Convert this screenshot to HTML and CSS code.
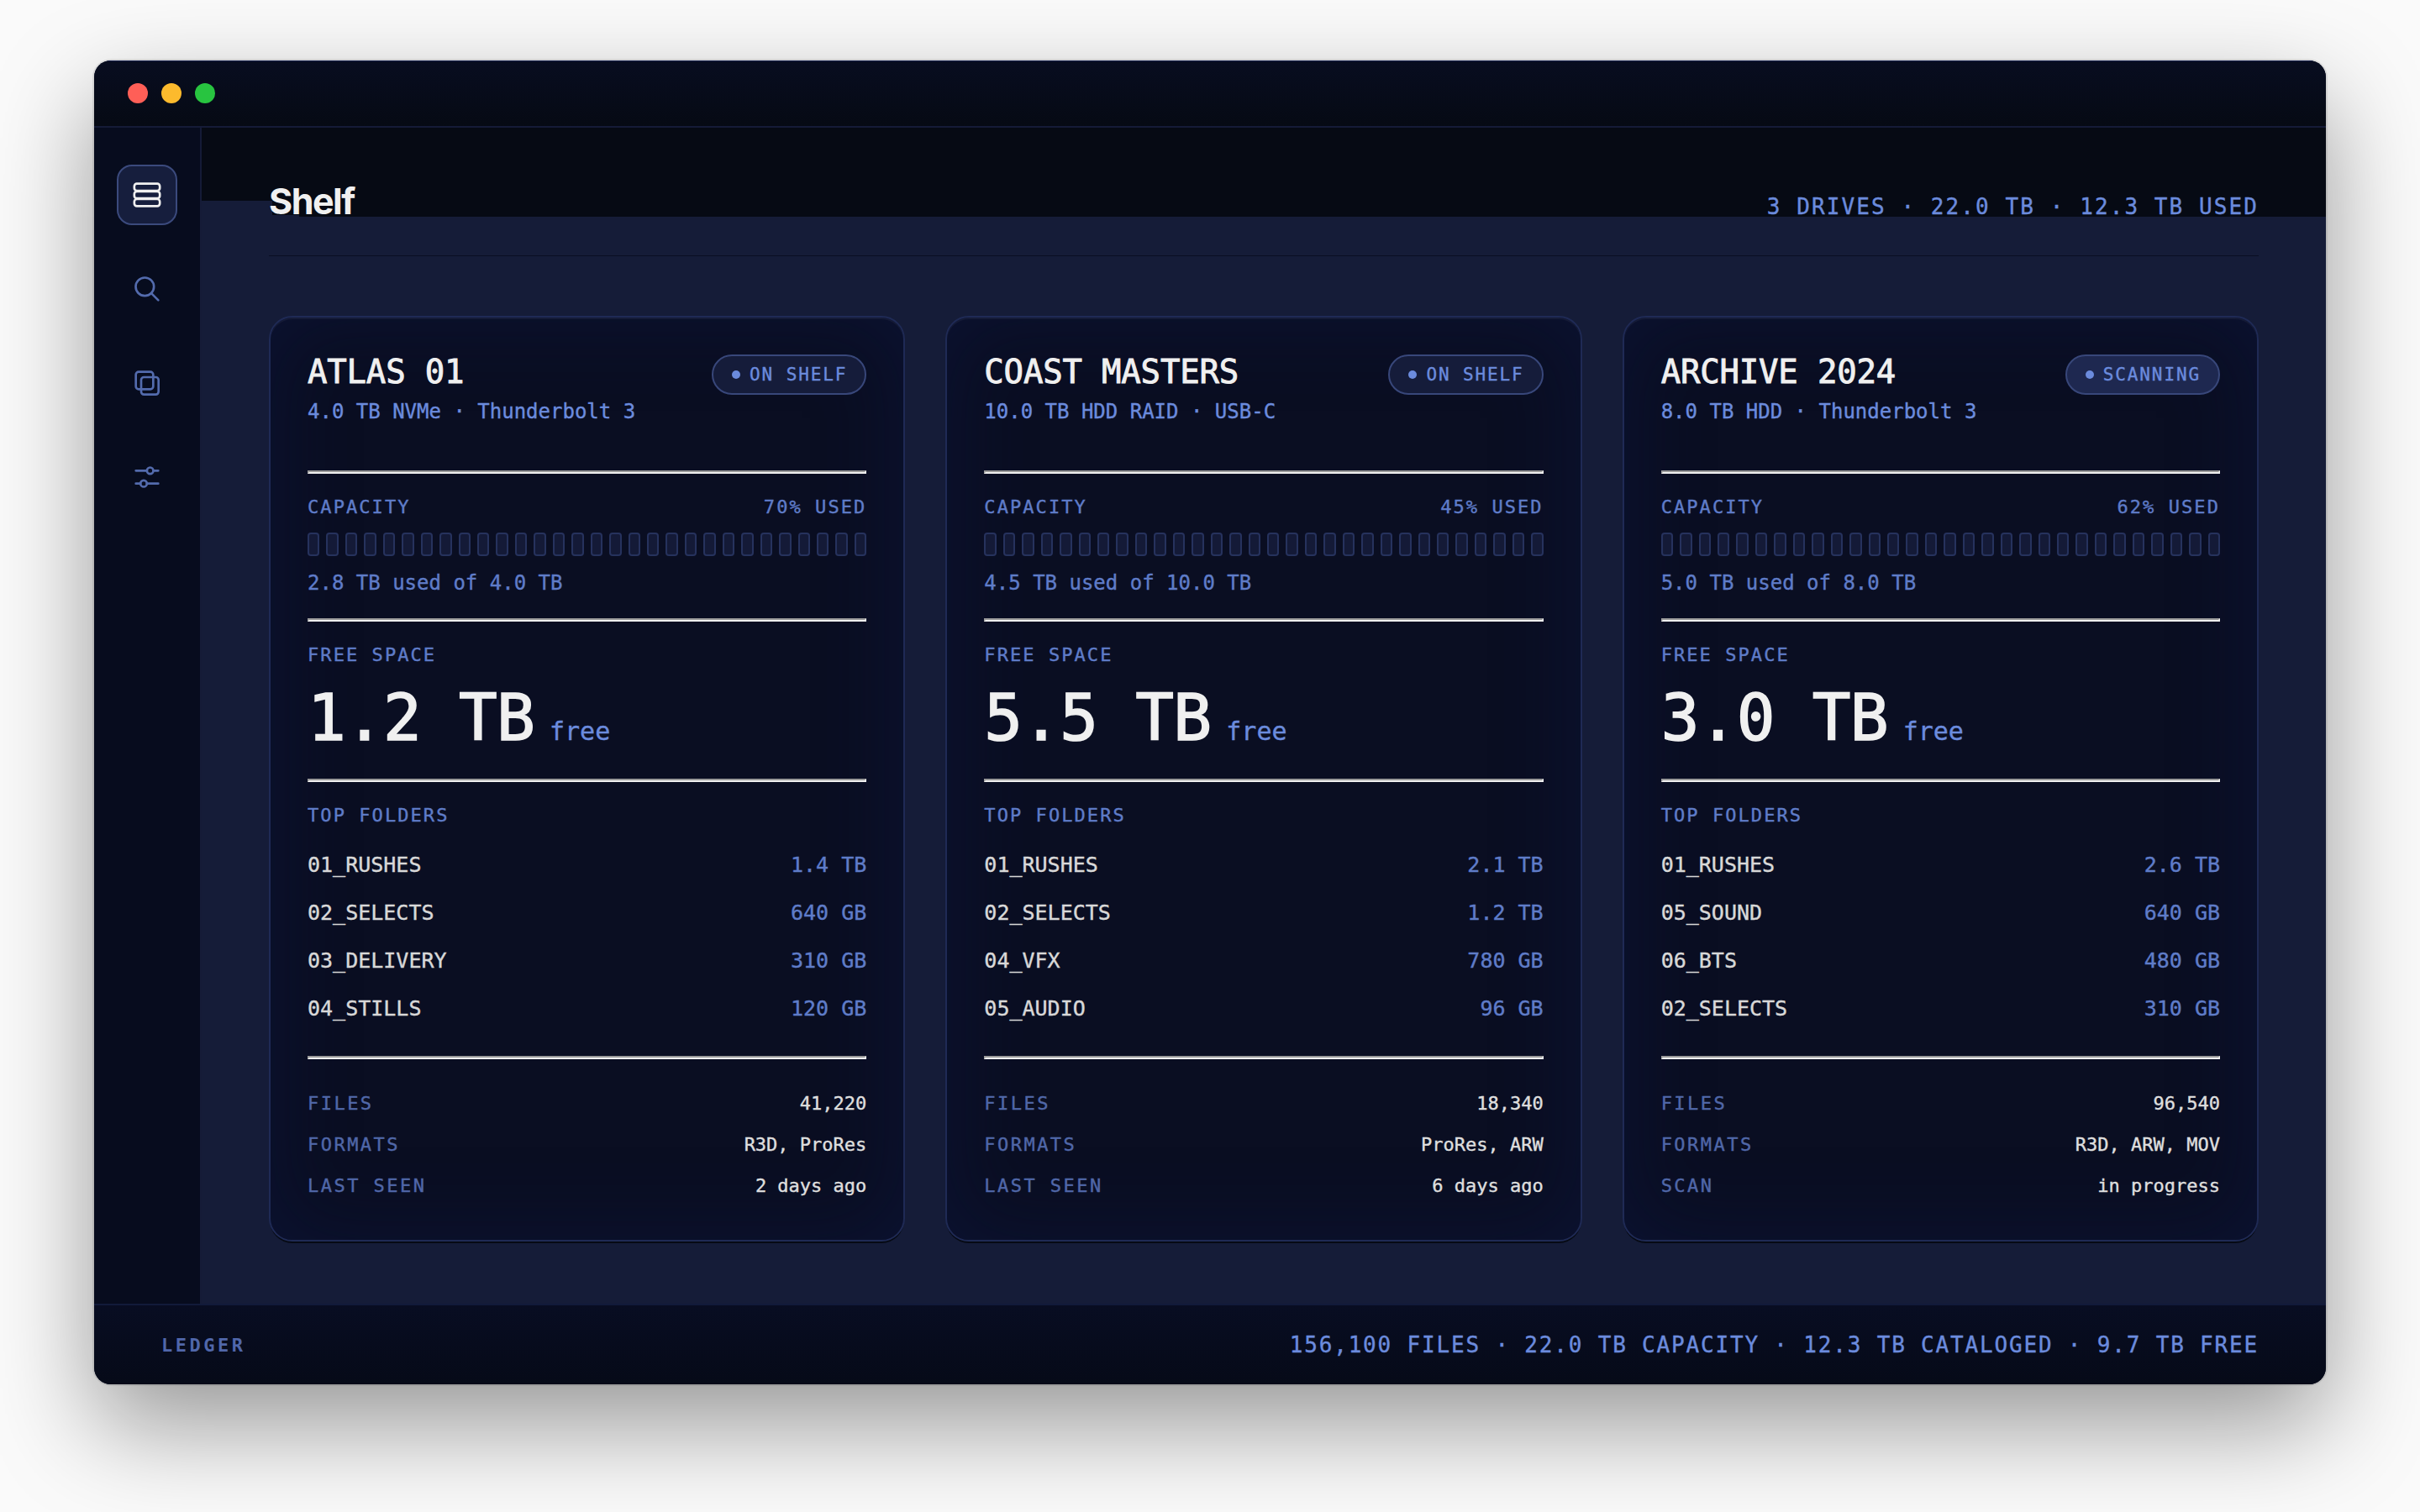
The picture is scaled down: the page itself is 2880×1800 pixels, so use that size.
FILE: index.html
```html
<!DOCTYPE html>
<html lang="en">
<head>
<meta charset="utf-8">
<title>Ledger</title>
<link rel="stylesheet" href="styles.css">
</head>
<body>
<div class="window">
  <div class="titlebar"><span class="light red"></span><span class="light amber"></span><span class="light green"></span></div>
  <div class="body">
    <nav class="sidebar">
      <a class="nav active"><svg viewBox="0 0 24 24"><rect x="2.9" y="4" width="18.2" height="5" rx="1.8"/><rect x="2.9" y="9.5" width="18.2" height="5" rx="1.8"/><rect x="2.9" y="15" width="18.2" height="5" rx="1.8"/></svg></a>
      <a class="nav"><svg viewBox="0 0 24 24"><circle cx="10.4" cy="10.4" r="6.5"/><path d="M15.2 15.2L20 20"/></svg></a>
      <a class="nav"><svg viewBox="0 0 24 24"><rect x="4" y="4" width="12.4" height="12.4" rx="2"/><rect x="7.8" y="7.8" width="12.4" height="12.4" rx="2"/></svg></a>
      <a class="nav"><svg viewBox="0 0 24 24"><path d="M4 7.4h8M16.5 7.4H20M4 16.6h3.3M11.9 16.6H20"/><circle cx="14.2" cy="7.4" r="2.3"/><circle cx="9.6" cy="16.6" r="2.3"/></svg></a>
    </nav>
    <main class="main">
      <header class="header"><h1>Shelf</h1><span class="summary">3 DRIVES · 22.0 TB · 12.3 TB USED</span></header>
      <div class="cards">
        <section class="card">
          <div class="head"><div><h2>ATLAS 01</h2><p class="sub">4.0 TB NVMe · Thunderbolt 3</p></div><span class="pill">ON SHELF</span></div>
          <hr>
          <div class="row label"><span>CAPACITY</span><span>70% USED</span></div>
          <div class="meter"><i></i><i></i><i></i><i></i><i></i><i></i><i></i><i></i><i></i><i></i><i></i><i></i><i></i><i></i><i></i><i></i><i></i><i></i><i></i><i></i><i></i><i></i><i></i><i></i><i></i><i></i><i></i><i></i><i></i><i></i></div>
          <p class="used">2.8 TB used of 4.0 TB</p>
          <hr>
          <div class="label">FREE SPACE</div>
          <div class="free"><strong>1.2 TB</strong><span>free</span></div>
          <hr>
          <div class="label">TOP FOLDERS</div>
          <div class="folders">
            <div class="row"><span>01_RUSHES</span><b>1.4 TB</b></div>
            <div class="row"><span>02_SELECTS</span><b>640 GB</b></div>
            <div class="row"><span>03_DELIVERY</span><b>310 GB</b></div>
            <div class="row"><span>04_STILLS</span><b>120 GB</b></div>
          </div>
          <hr>
          <div class="stats">
            <div class="row"><span>FILES</span><b>41,220</b></div>
            <div class="row"><span>FORMATS</span><b>R3D, ProRes</b></div>
            <div class="row"><span>LAST SEEN</span><b>2 days ago</b></div>
          </div>
        </section>
        <section class="card">
          <div class="head"><div><h2>COAST MASTERS</h2><p class="sub">10.0 TB HDD RAID · USB-C</p></div><span class="pill">ON SHELF</span></div>
          <hr>
          <div class="row label"><span>CAPACITY</span><span>45% USED</span></div>
          <div class="meter"><i></i><i></i><i></i><i></i><i></i><i></i><i></i><i></i><i></i><i></i><i></i><i></i><i></i><i></i><i></i><i></i><i></i><i></i><i></i><i></i><i></i><i></i><i></i><i></i><i></i><i></i><i></i><i></i><i></i><i></i></div>
          <p class="used">4.5 TB used of 10.0 TB</p>
          <hr>
          <div class="label">FREE SPACE</div>
          <div class="free"><strong>5.5 TB</strong><span>free</span></div>
          <hr>
          <div class="label">TOP FOLDERS</div>
          <div class="folders">
            <div class="row"><span>01_RUSHES</span><b>2.1 TB</b></div>
            <div class="row"><span>02_SELECTS</span><b>1.2 TB</b></div>
            <div class="row"><span>04_VFX</span><b>780 GB</b></div>
            <div class="row"><span>05_AUDIO</span><b>96 GB</b></div>
          </div>
          <hr>
          <div class="stats">
            <div class="row"><span>FILES</span><b>18,340</b></div>
            <div class="row"><span>FORMATS</span><b>ProRes, ARW</b></div>
            <div class="row"><span>LAST SEEN</span><b>6 days ago</b></div>
          </div>
        </section>
        <section class="card">
          <div class="head"><div><h2>ARCHIVE 2024</h2><p class="sub">8.0 TB HDD · Thunderbolt 3</p></div><span class="pill scanning">SCANNING</span></div>
          <hr>
          <div class="row label"><span>CAPACITY</span><span>62% USED</span></div>
          <div class="meter"><i></i><i></i><i></i><i></i><i></i><i></i><i></i><i></i><i></i><i></i><i></i><i></i><i></i><i></i><i></i><i></i><i></i><i></i><i></i><i></i><i></i><i></i><i></i><i></i><i></i><i></i><i></i><i></i><i></i><i></i></div>
          <p class="used">5.0 TB used of 8.0 TB</p>
          <hr>
          <div class="label">FREE SPACE</div>
          <div class="free"><strong>3.0 TB</strong><span>free</span></div>
          <hr>
          <div class="label">TOP FOLDERS</div>
          <div class="folders">
            <div class="row"><span>01_RUSHES</span><b>2.6 TB</b></div>
            <div class="row"><span>05_SOUND</span><b>640 GB</b></div>
            <div class="row"><span>06_BTS</span><b>480 GB</b></div>
            <div class="row"><span>02_SELECTS</span><b>310 GB</b></div>
          </div>
          <hr>
          <div class="stats">
            <div class="row"><span>FILES</span><b>96,540</b></div>
            <div class="row"><span>FORMATS</span><b>R3D, ARW, MOV</b></div>
            <div class="row"><span>SCAN</span><b>in progress</b></div>
          </div>
        </section>
      </div>
    </main>
  </div>
  <footer class="footer"><strong>LEDGER</strong><span>156,100 FILES · 22.0 TB CAPACITY · 12.3 TB CATALOGED · 9.7 TB FREE</span></footer>
</div>
</body>
</html>
```
FILE: styles.css
```css
* { box-sizing: border-box; }
body {
  margin: 0;
  height: 1800px;
  padding: 72px 112px 152px;
  overflow: hidden;
  background: #fafafa;
  font-family: "DejaVu Sans Mono", "Liberation Mono", monospace;
  color: #f0f0f0;
  -webkit-text-stroke: .4px currentColor;
}
h1, h2, p { margin: 0; font-weight: 400; }
b { font-weight: 400; }

.window {
  height: 1576px;
  display: flex;
  flex-direction: column;
  border-radius: 20px;
  overflow: hidden;
  background: #151b37;
  box-shadow: 0 0 0 2px rgba(0, 0, 0, .08), 0 48px 120px rgba(0, 0, 0, .4);
}
.titlebar {
  flex: none;
  height: 80px;
  display: flex;
  align-items: center;
  gap: 16px;
  padding-left: 40px;
  border-bottom: 2px solid #151b37;
  background: linear-gradient(#080d20, #060a14);
  box-shadow: inset 0 1px #1a2450;
}
.light { width: 24px; height: 24px; border-radius: 50%; }
.red { background: #ff5f57; }
.amber { background: #fcba2d; }
.green { background: #28c440; }

.body { flex: 1; display: flex; min-height: 0; }
.sidebar {
  flex: none;
  width: 128px;
  padding-top: 44px;
  display: flex;
  flex-direction: column;
  align-items: center;
  gap: 40px;
  border-right: 2px solid #151b37;
  background: #070c1e;
}
.nav {
  width: 72px;
  height: 72px;
  display: flex;
  align-items: center;
  justify-content: center;
  border-radius: 18px;
  color: #536bad;
}
.nav.active { color: #f0f0f0; background: #161e3d; border: 2px solid #3b4a7d; }
.nav svg {
  flex: none;
  width: 40px;
  height: 40px;
  fill: none;
  stroke: currentColor;
  stroke-width: 1.6;
  stroke-linecap: round;
  stroke-linejoin: round;
}

.main {
  flex: 1;
  padding: 0 80px;
  background:
    linear-gradient(#151c38, #151c38) 0 87px / 84px 20px no-repeat,
    linear-gradient(#151c38, #151c38) 84px 104px / 32px 3px no-repeat,
    linear-gradient(#060a14, #060a14) 0 0 / 100% 106px no-repeat,
    #151c38;
}
.header {
  height: 153px;
  padding-top: 60px;
  display: flex;
  align-items: baseline;
  justify-content: space-between;
  border-bottom: 1px solid #090e22;
}
h1 {
  font: 700 43px/54px Inter, sans-serif;
  letter-spacing: -.035em;
  -webkit-text-stroke: 0;
}
.summary { font-size: 26px; letter-spacing: .08em; color: #6b8bdd; }

.cards {
  margin-top: 71px;
  display: grid;
  grid-template-columns: repeat(3, 1fr);
  gap: 48px;
}
.card {
  height: 1102px;
  padding: 44px 44px 0;
  border: 2px solid #1f2a55;
  border-radius: 28px;
  background: #0a0e22;
  box-shadow: inset 0 2px #151b37, inset 0 0 100px rgba(13, 25, 70, .45), 0 3px 0 -1px #060a14;
}
.head { display: flex; justify-content: space-between; align-items: flex-start; height: 94px; }
h2 { font-size: 39px; line-height: 42px; letter-spacing: -.005em; -webkit-text-stroke-width: .9px; }
.sub { margin-top: 8px; font-size: 24px; line-height: 36px; color: #6b8bdd; }
.pill {
  height: 48px;
  display: flex;
  align-items: center;
  gap: 11px;
  padding: 0 21px 0 22px;
  border: 2px solid #38477a;
  border-radius: 24px;
  background: #151c3a;
  font-size: 21px;
  letter-spacing: .09em;
  color: #6b8bdd;
}
.pill::before { content: ""; width: 10px; height: 10px; border-radius: 50%; background: currentColor; }
.pill.scanning { background: #1e2850; }

hr {
  height: 4px;
  margin: 44px 0 26px;
  border: 2px solid;
  border-color: #9a9a9a #f0f0f0 #f0f0f0 #9a9a9a;
}
.row { display: flex; justify-content: space-between; }
.label { padding-top: 1px; font-size: 22px; line-height: 25px; letter-spacing: .094em; color: #5f7cc8; }
.meter { display: grid; grid-template-columns: repeat(30, 1fr); gap: 8px; height: 28px; margin: 18px 0; }
.meter i { border: 2px solid #26325d; border-radius: 4px; background: #141a37; }
.used { font-size: 24px; line-height: 28px; color: #5f7cc8; }
.used + hr { margin-top: 28px; }
.free { display: flex; align-items: baseline; gap: 18px; height: 76px; margin-top: 25px; }
.free strong { font-size: 76px; line-height: 76px; font-weight: 400; letter-spacing: -.01em; -webkit-text-stroke-width: 1.6px; }
.free span { font-size: 30px; color: #6b8bdd; }
.free + hr { margin-top: 34px; }
.folders { margin-top: 18px; font-size: 25px; line-height: 57px; color: #d8d8d8; }
.folders b { color: #5f7cc8; }
.folders + hr { margin: 28px 0; }
.stats { font-size: 22px; line-height: 49px; }
.stats span { letter-spacing: .112em; color: #5067a8; }
.stats b { color: #dedede; }

.footer {
  flex: none;
  height: 96px;
  display: flex;
  align-items: center;
  justify-content: space-between;
  padding: 0 80px;
  border-top: 2px solid #121a3a;
  background: linear-gradient(#080d22, #060a18);
}
.footer strong { font-size: 22px; letter-spacing: .16em; color: #5067aa; -webkit-text-stroke-width: 0; }
.footer span { font-size: 26px; letter-spacing: .07em; color: #6b8bdd; }
```
